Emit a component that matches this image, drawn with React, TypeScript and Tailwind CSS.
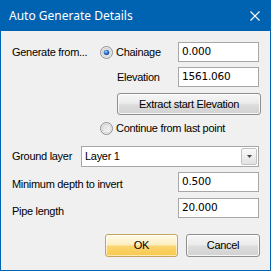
function Radio({ checked }: { checked?: boolean }) {
  return (
    <svg width="13" height="13" viewBox="0 0 13 13" className="shrink-0">
      <defs>
        <linearGradient id="ring" x1="0" y1="0" x2="1" y2="1">
          <stop offset="0" stopColor="#dcdcdc" />
          <stop offset="1" stopColor="#f6f6f6" />
        </linearGradient>
        <radialGradient id="dot" cx="0.4" cy="0.35" r="0.7">
          <stop offset="0" stopColor="#b8d8f8" />
          <stop offset="0.5" stopColor="#2f74c8" />
          <stop offset="1" stopColor="#1b4f96" />
        </radialGradient>
      </defs>
      <circle cx="6.5" cy="6.5" r="6" fill="#f4f4f4" stroke="#8f8f8f" strokeWidth="1" />
      <circle cx="6.5" cy="6.5" r="4.5" fill="url(#ring)" stroke="#c9c9c9" strokeWidth="0.8" />
      {checked && <circle cx="6.5" cy="6.5" r="2.8" fill="url(#dot)" />}
    </svg>
  )
}

function TextBox({ value }: { value: string }) {
  return (
    <div className="w-[81px] h-[20px] shrink-0 bg-white border border-[#a7a7a7] flex items-center pl-[3px] font-['DejaVu_Sans',sans-serif] text-[10.5px] tracking-[-0.2px]">
      {value}
    </div>
  )
}

export default function App() {
  return (
    <div className="w-[271px] h-[271px] flex flex-col bg-[#0063b1] font-['Liberation_Sans',Arial,sans-serif] text-[11px] tracking-[-0.3px] text-black">
      <div className="h-[31px] shrink-0 flex items-center justify-between pl-[9px] pr-[11px] text-white tracking-normal">
        <span className="font-['Noto_Sans',sans-serif] text-[12px] leading-none">Auto Generate Details</span>
        <svg width="10" height="10" viewBox="0 0 10 10">
          <path d="M0.5 0.5L9.5 9.5M9.5 0.5L0.5 9.5" stroke="#fff" strokeWidth="1.1" />
        </svg>
      </div>

      <div className="flex-1 mx-[1px] mb-[1px] bg-[#f0f0f0] pl-[11px] pr-[11px] pt-[11px]">
        <div className="flex">
          <div className="w-[88px] shrink-0 pt-[2px]">Generate from...</div>
          <div className="flex-1 flex flex-col">
            <div className="h-[20px] flex items-center">
              <Radio checked />
              <span className="ml-[3px] flex-1 pt-[1px]">Chainage</span>
              <TextBox value="0.000" />
            </div>
            <div className="mt-[5px] h-[20px] flex items-center">
              <span className="pl-[17px] flex-1">Elevation</span>
              <TextBox value="1561.060" />
            </div>
            <button className="mt-[6px] ml-[17px] -mr-[2px] h-[22px] rounded-[3px] border border-[#8e8f8f] bg-[linear-gradient(#f6f6f6_0%,#ececec_45%,#dcdcdc_55%,#d2d2d2_100%)] shadow-[inset_0_0_0_1px_rgba(255,255,255,0.8)]">
              Extract start Elevation
            </button>
            <div className="mt-[6px] h-[14px] flex items-center">
              <Radio />
              <span className="ml-[3px]">Continue from last point</span>
            </div>
          </div>
        </div>

        <div className="mt-[11px] h-[21px] flex items-center">
          <span className="w-[69px] shrink-0">Ground layer</span>
          <div className="flex-1 h-full bg-white border border-[#a7a7a7] flex items-center pl-[3px] pr-[1px]">
            <span className="flex-1">Layer 1</span>
            <div className="w-[16px] h-[17px] rounded-[2px] border border-[#c3c3c3] bg-[linear-gradient(#fafafa_0%,#eeeeee_50%,#e2e2e2_100%)] flex items-center justify-center">
              <svg width="5" height="3" viewBox="0 0 5 3">
                <path d="M0 0H5L2.5 3Z" fill="#4a4a4a" />
              </svg>
            </div>
          </div>
        </div>

        <div className="mt-[5px] h-[20px] flex items-center">
          <span className="flex-1 pt-[5px]">Minimum depth to invert</span>
          <TextBox value="0.500" />
        </div>
        <div className="mt-[6px] h-[20px] flex items-center">
          <span className="flex-1 pt-[6px]">Pipe length</span>
          <TextBox value="20.000" />
        </div>

        <div className="mt-[16px] flex justify-end gap-[8px] -mr-[1px]">
          <button className="w-[73px] h-[23px] rounded-[3px] border border-[#c5a55a] bg-[linear-gradient(#fffbea_0%,#fdefc2_45%,#fbd46e_55%,#f8c94c_100%)] shadow-[inset_0_0_0_1px_rgba(255,255,255,0.6)]">
            OK
          </button>
          <button className="w-[74px] h-[23px] rounded-[3px] border border-[#8e8f8f] bg-[linear-gradient(#f6f6f6_0%,#ececec_45%,#dcdcdc_55%,#d2d2d2_100%)] shadow-[inset_0_0_0_1px_rgba(255,255,255,0.8)]">
            Cancel
          </button>
        </div>
      </div>
    </div>
  )
}
